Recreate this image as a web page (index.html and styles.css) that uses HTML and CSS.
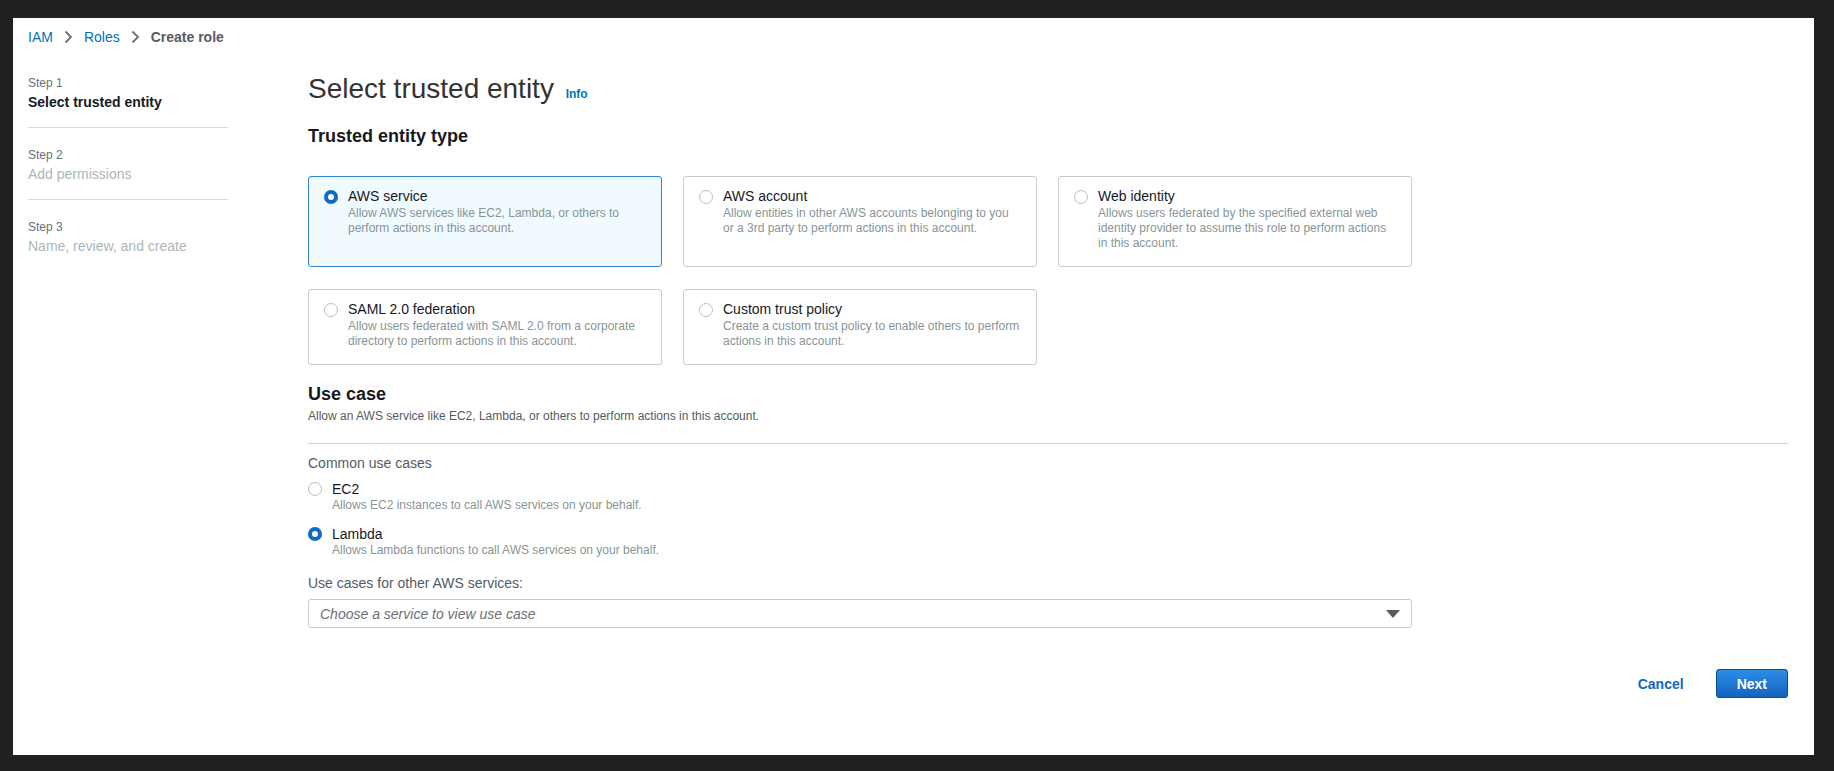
FILE: index.html
```html
<!DOCTYPE html>
<html lang="en">
<head>
    <meta charset="UTF-8">
    <meta name="viewport" content="width=device-width, initial-scale=1.0">
    <title>Create role | IAM</title>
    <link rel="stylesheet" href="styles.css">
</head>
<body>
    <div class="panel">
        <nav class="breadcrumb">
            <a href="#">IAM</a>
            <svg class="chevron" width="9" height="14" viewBox="0 0 9 14"><polyline points="1.5,1.5 7,7 1.5,12.5" fill="none" stroke="#687078" stroke-width="1.8"/></svg>
            <a href="#">Roles</a>
            <svg class="chevron" width="9" height="14" viewBox="0 0 9 14"><polyline points="1.5,1.5 7,7 1.5,12.5" fill="none" stroke="#687078" stroke-width="1.8"/></svg>
            <span class="current">Create role</span>
        </nav>

        <div class="layout">
            <aside class="steps">
                <div class="step">
                    <div class="step-num">Step 1</div>
                    <div class="step-title active">Select trusted entity</div>
                </div>
                <div class="step">
                    <div class="step-num">Step 2</div>
                    <div class="step-title">Add permissions</div>
                </div>
                <div class="step last">
                    <div class="step-num">Step 3</div>
                    <div class="step-title">Name, review, and create</div>
                </div>
            </aside>

            <main class="content">
                <h1>Select trusted entity <a class="info" href="#">Info</a></h1>

                <h2 class="section-title">Trusted entity type</h2>
                <div class="tiles">
                    <div class="tile selected">
                        <span class="radio checked"></span>
                        <div class="tile-text">
                            <div class="tile-label">AWS service</div>
                            <div class="tile-desc">Allow AWS services like EC2, Lambda, or others to perform actions in this account.</div>
                        </div>
                    </div>
                    <div class="tile">
                        <span class="radio"></span>
                        <div class="tile-text">
                            <div class="tile-label">AWS account</div>
                            <div class="tile-desc">Allow entities in other AWS accounts belonging to you or a 3rd party to perform actions in this account.</div>
                        </div>
                    </div>
                    <div class="tile">
                        <span class="radio"></span>
                        <div class="tile-text">
                            <div class="tile-label">Web identity</div>
                            <div class="tile-desc">Allows users federated by the specified external web identity provider to assume this role to perform actions in this account.</div>
                        </div>
                    </div>
                    <div class="tile">
                        <span class="radio"></span>
                        <div class="tile-text">
                            <div class="tile-label">SAML 2.0 federation</div>
                            <div class="tile-desc">Allow users federated with SAML 2.0 from a corporate directory to perform actions in this account.</div>
                        </div>
                    </div>
                    <div class="tile">
                        <span class="radio"></span>
                        <div class="tile-text">
                            <div class="tile-label">Custom trust policy</div>
                            <div class="tile-desc">Create a custom trust policy to enable others to perform actions in this account.</div>
                        </div>
                    </div>
                </div>

                <h2 class="usecase-title">Use case</h2>
                <p class="usecase-sub">Allow an AWS service like EC2, Lambda, or others to perform actions in this account.</p>

                <div class="usecase-body">
                    <div class="field-label">Common use cases</div>
                    <div class="option first">
                        <span class="radio"></span>
                        <div>
                            <div class="option-label">EC2</div>
                            <div class="option-desc">Allows EC2 instances to call AWS services on your behalf.</div>
                        </div>
                    </div>
                    <div class="option">
                        <span class="radio checked"></span>
                        <div>
                            <div class="option-label">Lambda</div>
                            <div class="option-desc">Allows Lambda functions to call AWS services on your behalf.</div>
                        </div>
                    </div>

                    <div class="field-label other">Use cases for other AWS services:</div>
                    <div class="select">
                        <span class="placeholder">Choose a service to view use case</span>
                        <span class="caret"></span>
                    </div>
                </div>

                <div class="actions">
                    <a class="cancel" href="#">Cancel</a>
                    <button class="next">Next</button>
                </div>
            </main>
        </div>
    </div>
</body>
</html>
```

FILE: styles.css
```css
* {
    box-sizing: border-box;
}

html, body {
    height: 100%;
}

body {
    margin: 0;
    padding: 18px 20px 16px 13px;
    background-color: #202020;
    font-family: "Liberation Sans", Arial, sans-serif;
    color: #16191f;
}

a {
    text-decoration: none;
}

.panel {
    height: 100%;
    background-color: #fff;
    padding: 9px 26px 0 15px;
}

/* Breadcrumb */
.breadcrumb {
    display: flex;
    align-items: center;
    gap: 11px;
    font-size: 14px;
    line-height: 20px;
}

.breadcrumb a {
    color: #0073bb;
}

.breadcrumb .chevron {
    display: block;
}

.breadcrumb .current {
    color: #545b64;
    font-weight: bold;
}

/* Layout */
.layout {
    display: grid;
    grid-template-columns: 200px 1fr;
    column-gap: 80px;
    margin-top: 20px;
}

/* Wizard steps */
.steps {
    padding-top: 7px;
}

.step {
    padding: 18px 0 15px;
    border-bottom: 1px solid #d5dbdb;
}

.step:first-child {
    padding-top: 0;
}

.step.last {
    border-bottom: none;
}

.step-num {
    font-size: 12px;
    line-height: 18px;
    color: #687078;
}

.step-title {
    font-size: 14px;
    line-height: 20px;
    color: #aab7b8;
}

.step-title.active {
    color: #16191f;
    font-weight: bold;
}

/* Main content */
h1 {
    margin: 4px 0 0;
    font-size: 28px;
    line-height: 36px;
    font-weight: normal;
    color: #333;
}

.info {
    margin-left: 4px;
    font-size: 12px;
    font-weight: bold;
    color: #0073bb;
}

.section-title {
    margin: 13px 0 0;
    font-size: 18px;
    line-height: 22px;
    color: #16191f;
}

.tiles {
    display: grid;
    grid-template-columns: repeat(3, 354px);
    gap: 22px 21px;
    margin-top: 29px;
    align-items: start;
}

.tile {
    display: flex;
    gap: 10px;
    border: 1px solid #c6cbcc;
    border-radius: 3px;
    padding: 10px 15px 15px;
    background-color: #fff;
}

.tile.selected {
    border-color: #2b84d4;
    background-color: #f1faff;
}

.tiles .tile:nth-child(-n+3) {
    min-height: 91px;
}

.radio {
    flex: none;
    width: 14px;
    height: 14px;
    margin-top: 3px;
    border-radius: 50%;
    border: 1px solid #b9c1c2;
    background-color: #fff;
}

.radio.checked {
    border: 4.5px solid #0f6cc0;
}

.tile-label {
    font-size: 14px;
    line-height: 19px;
    color: #16191f;
}

.tile-desc {
    font-size: 12px;
    line-height: 15px;
    color: #879596;
}

.usecase-title {
    margin: 21px 0 0;
    font-size: 18px;
    line-height: 16px;
    color: #16191f;
}

.usecase-sub {
    margin: 8px 0 0;
    font-size: 12px;
    line-height: 12px;
    color: #545b64;
}

.usecase-body {
    margin-top: 21px;
    border-top: 1px solid #cfd4d5;
    padding-top: 9px;
}

.field-label {
    font-size: 14px;
    line-height: 20px;
    color: #545b64;
}

.field-label.other {
    margin-top: 15px;
}

.option {
    display: flex;
    gap: 10px;
    margin-top: 12px;
}

.option.first {
    margin-top: 7px;
}

.option .radio {
    margin-top: 2px;
}

.option-label {
    font-size: 14px;
    line-height: 18px;
    color: #16191f;
}

.option-desc {
    font-size: 12px;
    line-height: 15px;
    color: #879596;
}

.select {
    display: flex;
    align-items: center;
    justify-content: space-between;
    width: 1104px;
    height: 29px;
    margin-top: 6px;
    padding: 0 11px 0 11px;
    border: 1px solid #c6cbcc;
    border-radius: 3px;
}

.placeholder {
    font-size: 14px;
    font-style: italic;
    color: #687078;
}

.caret {
    width: 0;
    height: 0;
    border-left: 7px solid transparent;
    border-right: 7px solid transparent;
    border-top: 8px solid #545b64;
}

.actions {
    display: flex;
    justify-content: flex-end;
    align-items: center;
    gap: 32px;
    margin-top: 41px;
}

.cancel {
    font-size: 14px;
    font-weight: bold;
    color: #1066c4;
}

.next {
    height: 29px;
    padding: 0 20px;
    border: 1px solid #0b4c8c;
    border-radius: 3px;
    background: linear-gradient(#2d8de6, #1463bf);
    color: #fff;
    font-family: inherit;
    font-size: 14px;
    font-weight: bold;
    cursor: pointer;
}
```
